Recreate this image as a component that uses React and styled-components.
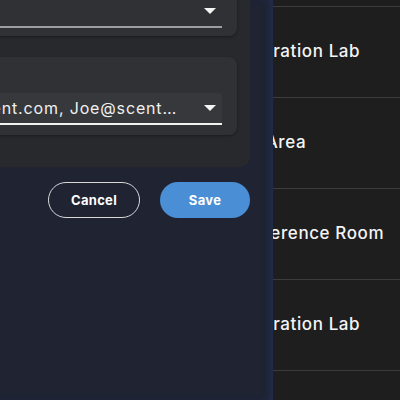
import React from "react";
import styled, { createGlobalStyle } from "styled-components";

const GlobalStyle = createGlobalStyle`
  html, body {
    margin: 0;
    padding: 0;
    background: #1e1e1f;
    overflow: hidden;
  }
  * {
    box-sizing: border-box;
  }
`;

const rooms = ["Calibration Lab", "Lab Area", "Conference Room", "Calibration Lab", "Lab Area"];

export default function App() {
  return (
    <>
      <GlobalStyle />
      <Page>
        <Table>
          {rooms.map((room, i) => (
            <Row key={i}>
              <Cell>{room}</Cell>
            </Row>
          ))}
        </Table>
        <Drawer>
          <Panel>
            <Field>
              <Label>Location</Label>
              <Select>
                <SelectText>Daily</SelectText>
                <Arrow />
              </Select>
            </Field>
            <Field $gap={21}>
              <Label>Recipients</Label>
              <Select $active>
                <SelectText>Sarah@scent.com, Joe@scent.com, Ben@scent.com</SelectText>
                <Arrow />
              </Select>
            </Field>
          </Panel>
          <Actions>
            <Button>Cancel</Button>
            <Button $primary>Save</Button>
          </Actions>
        </Drawer>
      </Page>
    </>
  );
}

const Page = styled.div`
  position: relative;
  width: 400px;
  height: 400px;
  overflow: hidden;
  background: #1e1e1f;
  font-family: Inter, "Liberation Sans", sans-serif;
`;

const Table = styled.div`
  padding-top: 6px;
  padding-left: 229px;
`;

const Row = styled.div`
  height: 91px;
  border-top: 1px solid #3c3c3e;
  display: flex;
  align-items: center;
`;

const Cell = styled.div`
  color: #f4f4f4;
  font-size: 17px;
  font-weight: 500;
  letter-spacing: 0.6px;
  white-space: nowrap;
  margin-top: -3px;
`;

const Drawer = styled.div`
  position: absolute;
  top: 0;
  left: 0;
  bottom: 0;
  width: 273px;
  background: #1f2332;
  box-shadow: inset -7px 0 8px -4px rgba(35, 58, 110, 0.5);
`;

const Panel = styled.div`
  width: 382px;
  margin-left: -132px;
  margin-top: -56px;
  padding: 16px 13px 32px;
  background: #27292c;
  border-radius: 0 0 10px 10px;
`;

const Field = styled.div`
  margin-top: ${(p) => p.$gap || 0}px;
  padding: 10px 15px 10px;
  background: #2f3134;
  border-radius: 8px;
  box-shadow: 0 1px 3px rgba(0, 0, 0, 0.35);
  &:first-child {
    padding-bottom: 8px;
  }
`;

const Label = styled.div`
  height: 26px;
  line-height: 16px;
  color: #aaa;
  font-size: 12px;
`;

const Select = styled.div`
  display: flex;
  align-items: center;
  height: 32px;
  padding: 0 6px 0 12px;
  background: ${(p) => (p.$active ? "#36383b" : "#2f3134")};
  border-bottom: 2px solid ${(p) => (p.$active ? "#f2f2f2" : "#9d9d9d")};
  border-radius: 4px 4px 0 0;
`;

const SelectText = styled.div`
  flex: 1;
  min-width: 0;
  color: #f0f0f0;
  font-size: 16px;
  letter-spacing: 0.85px;
  white-space: nowrap;
  overflow: hidden;
  text-overflow: ellipsis;
`;

const Arrow = styled.div`
  flex: none;
  margin-left: 25px;
  width: 0;
  height: 0;
  border-left: 6.5px solid transparent;
  border-right: 6.5px solid transparent;
  border-top: 6px solid #f4f4f4;
`;

const Actions = styled.div`
  display: flex;
  justify-content: flex-end;
  gap: 20px;
  margin-top: 15px;
  padding-right: 23px;
`;

const Button = styled.button`
  width: ${(p) => (p.$primary ? 90 : 92)}px;
  height: 36px;
  border-radius: 18px;
  border: ${(p) => (p.$primary ? "none" : "1.5px solid #d9d9d9")};
  background: ${(p) => (p.$primary ? "#4a8fd6" : "transparent")};
  color: #fff;
  font-family: Inter, "Liberation Sans", sans-serif;
  font-size: 13px;
  font-weight: 700;
  letter-spacing: 0.3px;
  cursor: pointer;
`;
